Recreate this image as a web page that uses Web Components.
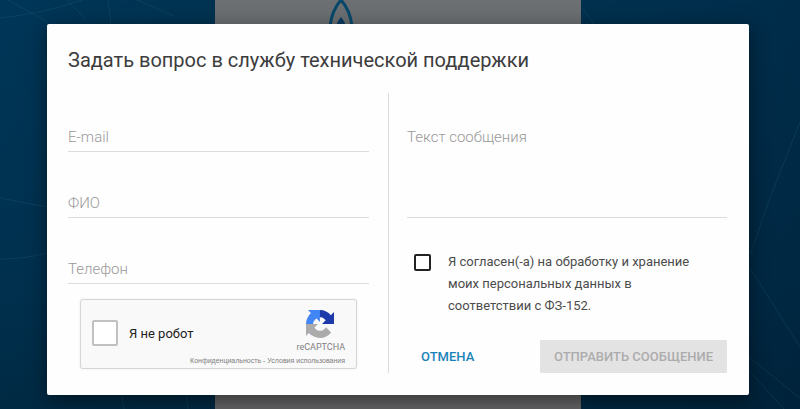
<!DOCTYPE html>
<html lang="ru">
<head>
<meta charset="utf-8">
<meta name="viewport" content="width=device-width, initial-scale=1">
<title>Техническая поддержка</title>
<style>
  body {
    margin: 0;
    font-family: Roboto, "Liberation Sans", sans-serif;
    background: #002d49;
    color: #444;
  }
</style>
</head>
<body>
<support-page>
  <support-dialog heading="Задать вопрос в службу технической поддержки">
    <text-field slot="contacts" label="E-mail" type="email"></text-field>
    <text-field slot="contacts" label="ФИО"></text-field>
    <text-field slot="contacts" label="Телефон" type="tel"></text-field>
    <robot-check slot="contacts"></robot-check>

    <text-field slot="message" label="Текст сообщения" multiline></text-field>
    <consent-box slot="message">Я согласен(-а) на обработку и хранение моих персональных данных в соответствии с ФЗ-152.</consent-box>
    <dialog-button slot="actions">Отмена</dialog-button>
    <dialog-button slot="actions" disabled>Отправить сообщение</dialog-button>
  </support-dialog>
</support-page>

<script>
class SupportPage extends HTMLElement {
  constructor() {
    super();

    const shadowRoot = this.attachShadow({ mode: 'open' });

    shadowRoot.innerHTML = `
      <style>
        :host {
          display: block;
          box-sizing: border-box;
          min-height: 100vh;
          padding: 24px 51px 14px 47px;
          position: relative;
          overflow: hidden;
          background: linear-gradient(100deg, #003658 0%, #003351 25%, #00304e 75%, #002a47 100%);
        }

        /* Dimmed page under the dialog */
        .backdrop {
          position: absolute;
          inset: 0;
          width: 100%;
          height: 100%;
        }

        main {
          position: relative;
        }
      </style>
      <svg class="backdrop" viewBox="0 0 800 409" preserveAspectRatio="none" aria-hidden="true">
        <defs>
          <linearGradient id="shade" x2="0" y2="1">
            <stop offset="0" stop-color="#001522" stop-opacity="0"/>
            <stop offset=".7" stop-color="#001522" stop-opacity=".15"/>
            <stop offset="1" stop-color="#001522" stop-opacity=".35"/>
          </linearGradient>
          <linearGradient id="sheet" x2="0" y2="1">
            <stop offset="0" stop-color="#6c7072"/>
            <stop offset="1" stop-color="#626264"/>
          </linearGradient>
        </defs>
        <rect width="800" height="409" fill="url(#shade)"/>
        <g fill="none" stroke="#3a7a93" stroke-opacity=".2">
          <path d="M8 0L48 22M67 0L85 19M108 0L111 24M137 0L174 16M0 18Q45 13 82 0M0 198L47 207M0 259Q25 259 47 253"/>
          <path d="M583 8L594 24M800 122L771 195L750 255M750 268L800 347M750 358L800 398M750 372L784 409M122 395L124 409M186 395L188 409"/>
        </g>
        <rect x="215" width="366" height="409" fill="url(#sheet)"/>
        <path d="M330 26Q332 10 341 0Q350 10 352 26" fill="none" stroke="#07486b" stroke-width="3"/>
        <path d="M336 26Q338 20 341 17Q344 20 346 26Z" fill="#0b3c62"/>
      </svg>
      <main><slot></slot></main>
    `;
  }
}

class SupportDialog extends HTMLElement {
  constructor() {
    super();

    const shadowRoot = this.attachShadow({ mode: 'open' });

    shadowRoot.innerHTML = `
      <style>
        :host {
          display: block;
          padding: 22px 22px 22px 21px;
          border-radius: 2px;
          background: #fefefe;
          box-shadow: 0 6px 16px rgba(0, 0, 0, 0.3), 0 2px 24px rgba(0, 0, 0, 0.2);
        }

        h1 {
          margin: 0 0 19px;
          font-size: 20px;
          font-weight: 400;
          line-height: 28px;
          color: #3c3c3c;
        }

        .columns {
          display: grid;
          grid-template-columns: 19fr 20fr;
        }

        .column {
          display: flex;
          flex-direction: column;
          padding-top: 32px;
        }

        .contacts {
          gap: 39px;
          padding-right: 19px;
          padding-bottom: 4px;
          border-right: 1px solid #dcdcdc;
        }

        .message {
          gap: 23px;
          padding-left: 18px;
        }

        .actions {
          display: flex;
          justify-content: space-between;
          margin-top: auto;
        }
      </style>
      <section role="dialog" aria-labelledby="heading">
        <h1 id="heading"></h1>
        <div class="columns">
          <div class="column contacts"><slot name="contacts"></slot></div>
          <div class="column message">
            <slot name="message"></slot>
            <div class="actions"><slot name="actions"></slot></div>
          </div>
        </div>
      </section>
    `;
  }

  connectedCallback() {
    this.shadowRoot.querySelector('h1').textContent = this.getAttribute('heading');
  }
}

class TextField extends HTMLElement {
  constructor() {
    super();
    this.attachShadow({ mode: 'open' });
  }

  connectedCallback() {
    const type = this.getAttribute('type') || 'text';
    const control = this.hasAttribute('multiline')
      ? '<textarea id="control" placeholder=" "></textarea>'
      : `<input id="control" type="${type}" placeholder=" ">`;

    this.shadowRoot.innerHTML = `
      <style>
        :host {
          display: grid;
        }

        /* The label sits in the same cell as the control */
        label,
        input,
        textarea {
          grid-area: 1 / 1;
          font: 300 15px/18px Roboto, "Liberation Sans", sans-serif;
        }

        label {
          padding: 3px 0 5px;
          color: #999;
          pointer-events: none;
        }

        input,
        textarea {
          box-sizing: border-box;
          width: 100%;
          height: 27px;
          margin: 0;
          padding: 3px 0 5px;
          border: 0;
          border-bottom: 1px solid #dcdcdc;
          border-radius: 0;
          outline: none;
          background: transparent;
          color: #444;
          resize: none;
        }

        textarea {
          height: 93px;
        }

        :focus {
          border-color: #1a83ba;
        }

        :not(:placeholder-shown) + label {
          visibility: hidden;
        }
      </style>
      ${control}
      <label for="control">${this.getAttribute('label')}</label>
    `;
  }
}

class RobotCheck extends HTMLElement {
  constructor() {
    super();

    const shadowRoot = this.attachShadow({ mode: 'open' });

    shadowRoot.innerHTML = `
      <style>
        :host {
          display: flex;
          justify-content: space-between;
          box-sizing: border-box;
          height: 70px;
          margin: -24px 12px 0;
          padding: 0 11px;
          border: 1px solid #d6d6d6;
          border-radius: 3px;
          background: #f9f9f9;
          box-shadow: 0 0 2px rgba(0, 0, 0, 0.1);
        }

        .check {
          display: flex;
          align-items: center;
          gap: 11px;
          height: 66px;
          font-size: 13px;
          color: #222;
          white-space: nowrap;
        }

        input {
          appearance: none;
          box-sizing: border-box;
          width: 26px;
          height: 26px;
          margin: 0;
          border: 2px solid #c1c1c1;
          border-radius: 2px;
          background: #fff;
        }

        input:checked {
          background: #4285f4;
        }

        .brand {
          display: flex;
          flex-direction: column;
          align-items: flex-end;
          width: 50px;
          padding-top: 10px;
          color: #808080;
          white-space: nowrap;
        }

        svg {
          width: 28px;
          height: 28px;
          margin-right: 11px;
        }

        .name {
          margin-top: 3px;
          font-size: 9px;
          line-height: 12px;
        }

        .links {
          margin-top: 3px;
          font-family: "Liberation Sans", sans-serif;
          font-size: 7px;
          line-height: 10px;
        }

        a {
          color: inherit;
          text-decoration: none;
        }
      </style>
      <div class="check">
        <input type="checkbox" id="robot">
        <label for="robot">Я не робот</label>
      </div>
      <div class="brand">
        <svg viewBox="0 0 64 64" aria-hidden="true">
          <path fill="#1c3aa9" d="M64 31.955l-.033-1.37V4.687l-7.16 7.16C50.948 4.674 42.033.093 32.05.093c-10.4 0-19.622 4.96-25.458 12.64l11.736 11.86a15.55 15.55 0 0 1 4.754-5.334c2.05-1.6 4.952-2.906 8.968-2.906.485 0 .86.057 1.135.163 4.976.393 9.288 3.14 11.828 7.124l-8.307 8.307L64 31.953"/>
          <path fill="#4285f4" d="M31.862.094l-1.37.033H4.594l7.16 7.16C4.58 13.147 0 22.06 0 32.046c0 10.4 4.96 19.622 12.64 25.458L24.5 45.768a15.55 15.55 0 0 1-5.334-4.754c-1.6-2.05-2.906-4.952-2.906-8.968 0-.485.057-.86.163-1.135.393-4.976 3.14-9.288 7.124-11.828l8.307 8.307L31.86.095"/>
          <path fill="#ababab" d="M.001 32.045l.033 1.37v25.898l7.16-7.16c5.86 7.173 14.774 11.754 24.76 11.754 10.4 0 19.622-4.96 25.458-12.64l-11.736-11.86a15.55 15.55 0 0 1-4.754 5.334c-2.05 1.6-4.952 2.906-8.968 2.906-.485 0-.86-.057-1.135-.163-4.976-.393-9.288-3.14-11.828-7.124l8.307-8.307c-10.522.04-22.4.066-27.295-.005"/>
        </svg>
        <div class="name">reCAPTCHA</div>
        <div class="links"><a href="#privacy">Конфиденциальность</a> - <a href="#terms">Условия использования</a></div>
      </div>
    `;
  }
}

class ConsentBox extends HTMLElement {
  constructor() {
    super();

    const shadowRoot = this.attachShadow({ mode: 'open' });

    shadowRoot.innerHTML = `
      <style>
        :host {
          display: block;
          padding: 10px 0 0 7px;
        }

        label {
          display: flex;
          gap: 17px;
          max-width: 280px;
          font-size: 13px;
          line-height: 22px;
          color: #4c4c4c;
        }

        input {
          appearance: none;
          box-sizing: border-box;
          flex: none;
          width: 17px;
          height: 17px;
          margin: 3px 0 0;
          border: 2px solid #222;
          border-radius: 2px;
        }

        input:checked {
          background: #1a83ba;
        }
      </style>
      <label><input type="checkbox"><span><slot></slot></span></label>
    `;
  }
}

class DialogButton extends HTMLElement {
  constructor() {
    super();

    const shadowRoot = this.attachShadow({ mode: 'open' });

    shadowRoot.innerHTML = `
      <style>
        :host {
          display: block;
        }

        button {
          height: 33px;
          padding: 0 14px;
          border: 0;
          border-radius: 1px;
          background: transparent;
          font: 500 13px Roboto, "Liberation Sans", sans-serif;
          text-transform: uppercase;
          color: #1a83ba;
          cursor: pointer;
        }

        button:disabled {
          background: #e4e3e4;
          color: #acacac;
          cursor: default;
        }
      </style>
      <button type="button"><slot></slot></button>
    `;
  }

  connectedCallback() {
    this.shadowRoot.querySelector('button').disabled = this.hasAttribute('disabled');
  }
}

customElements.define('support-page', SupportPage);
customElements.define('support-dialog', SupportDialog);
customElements.define('text-field', TextField);
customElements.define('robot-check', RobotCheck);
customElements.define('consent-box', ConsentBox);
customElements.define('dialog-button', DialogButton);
</script>
</body>
</html>
